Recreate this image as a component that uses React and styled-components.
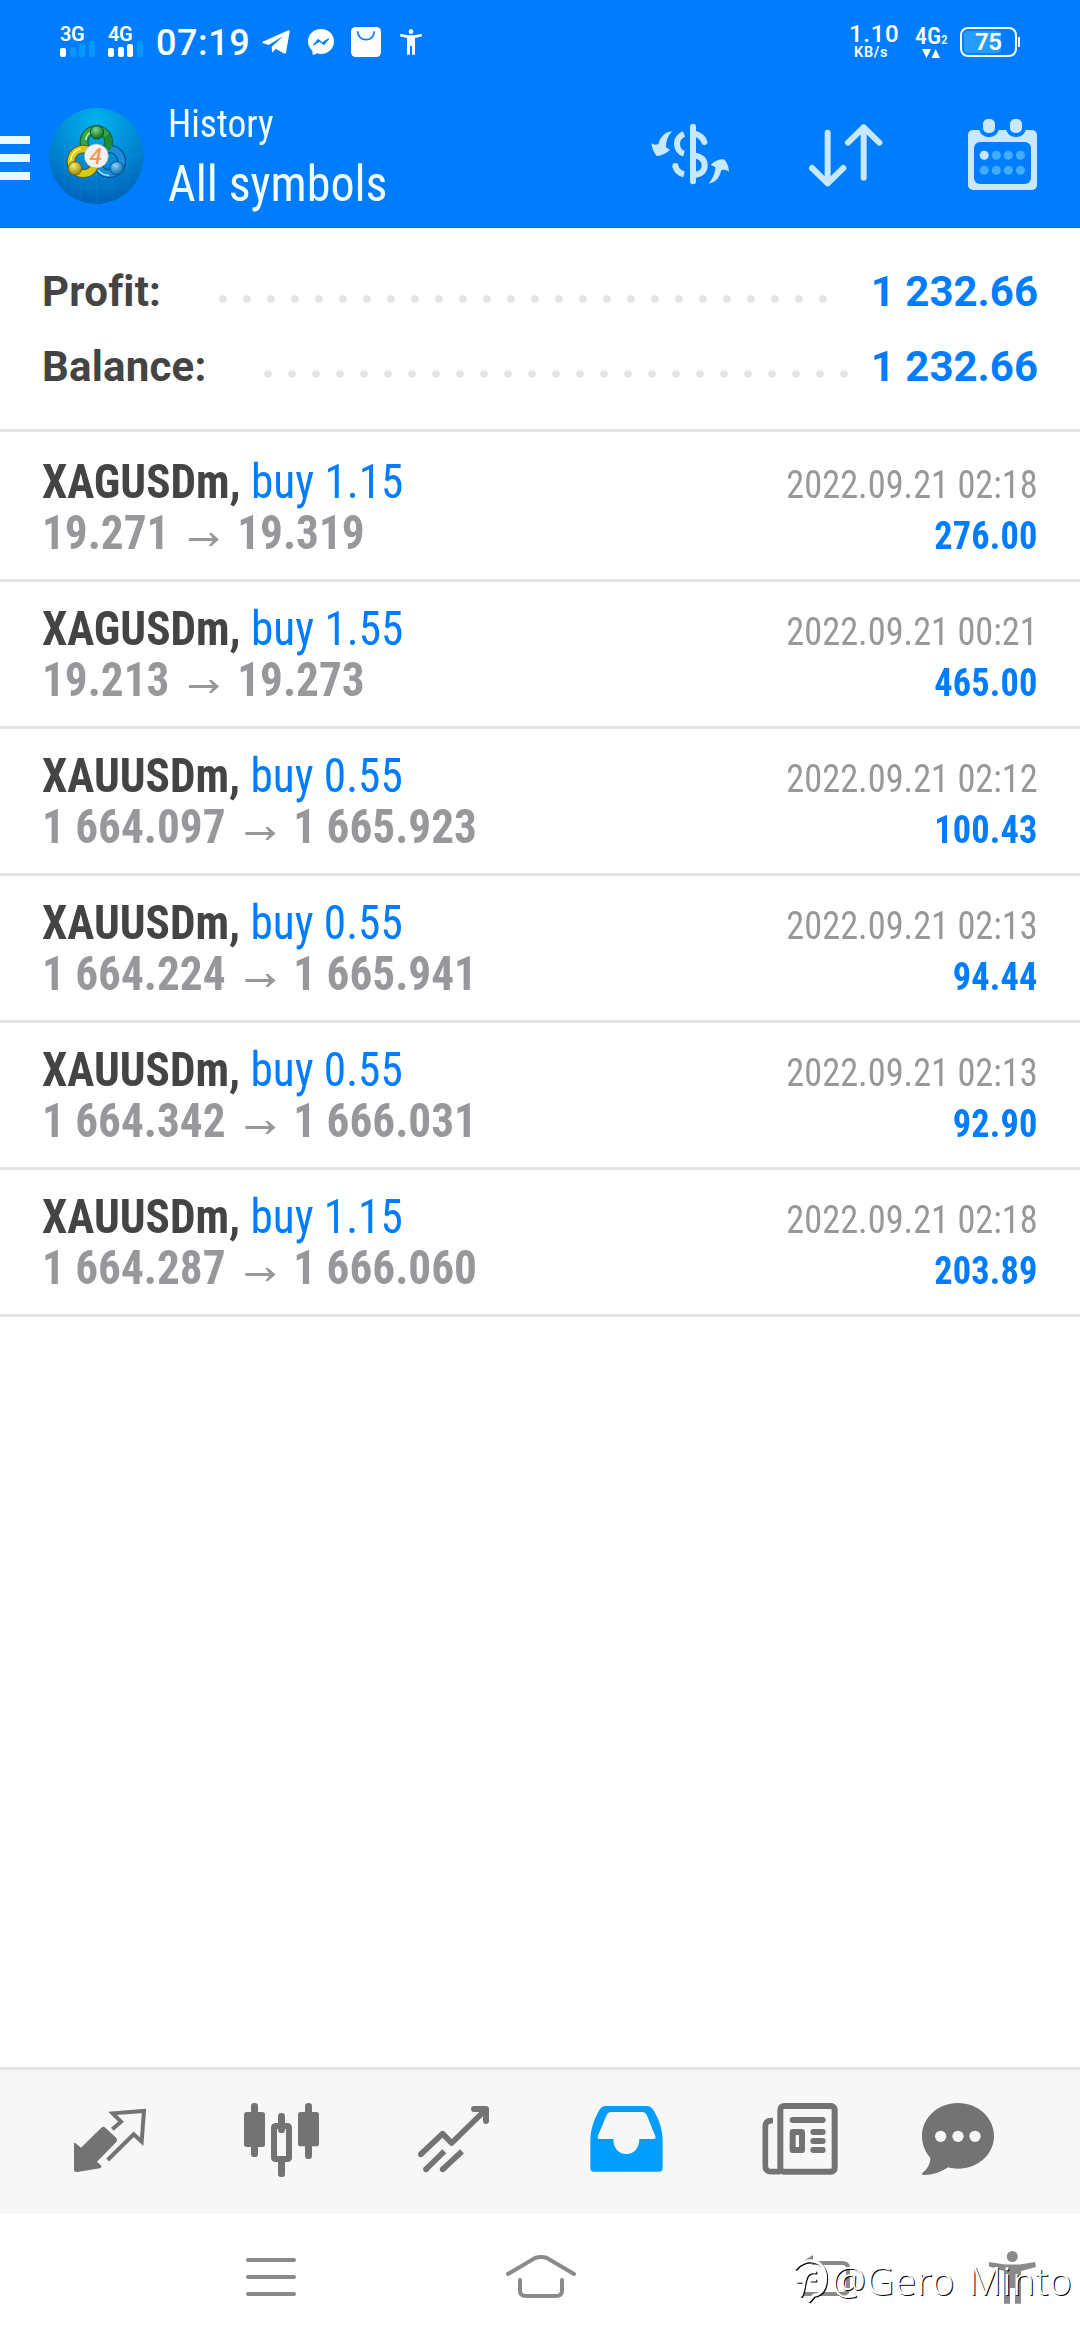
import React, { Fragment } from "react";
import styled, { createGlobalStyle, css } from "styled-components";

const GlobalStyle = createGlobalStyle`
  * {
    box-sizing: border-box;
  }
  body {
    margin: 0;
    background: #fff;
    font-family: Roboto, "Liberation Sans", sans-serif;
  }
  svg {
    display: block;
    overflow: visible;
    flex-shrink: 0;
  }
`;

const condensed = css`
  font-family: "Roboto Condensed", Roboto, "Liberation Sans", sans-serif;
  font-stretch: 75%;
`;

const orders = [
  { symbol: "XAGUSDm", volume: "buy 1.15", open: "19.271", close: "19.319", time: "2022.09.21 02:18", profit: "276.00" },
  { symbol: "XAGUSDm", volume: "buy 1.55", open: "19.213", close: "19.273", time: "2022.09.21 00:21", profit: "465.00" },
  { symbol: "XAUUSDm", volume: "buy 0.55", open: "1 664.097", close: "1 665.923", time: "2022.09.21 02:12", profit: "100.43" },
  { symbol: "XAUUSDm", volume: "buy 0.55", open: "1 664.224", close: "1 665.941", time: "2022.09.21 02:13", profit: "94.44" },
  { symbol: "XAUUSDm", volume: "buy 0.55", open: "1 664.342", close: "1 666.031", time: "2022.09.21 02:13", profit: "92.90" },
  { symbol: "XAUUSDm", volume: "buy 1.15", open: "1 664.287", close: "1 666.060", time: "2022.09.21 02:18", profit: "203.89" },
];

/* layout */
const Screen = styled.div`
  position: relative;
  display: flex;
  flex-direction: column;
  width: 1080px;
  height: 2340px;
  overflow: hidden;
  background: #fff;
`;

const Header = styled.header`
  height: 228px;
  background: #007dff;
  color: #f2fdff;
  border-bottom: 1px solid #0070e0;
`;

/* status bar */
const StatusBar = styled.div`
  display: flex;
  align-items: flex-start;
  height: 84px;
  padding: 27px 63px 0 60px;
  color: #fff;
`;

const Signal = styled.div`
  width: ${(props) => props.$width}px;
`;

const Network = styled.div`
  height: 15px;
  font-size: 20px;
  font-weight: 600;
  line-height: 15px;
  letter-spacing: -0.5px;
`;

const Bars = styled.div`
  display: flex;
  align-items: flex-end;
  gap: 3.5px;
  height: 16px;
  margin-top: -1px;
`;

const Bar = styled.i`
  width: 6px;
  height: ${(props) => props.$height}px;
  border-radius: 2px;
  background: ${(props) => (props.$on ? "#fff" : "#0399ff")};
`;

const Clock = styled.div`
  width: 106px;
  font-size: 36px;
  font-weight: 500;
  line-height: 33px;
  letter-spacing: 0.6px;
`;

const StatusIcons = styled.div`
  display: flex;
  align-items: center;
  height: 30px;
  flex: 1;
`;

const StatusIcon = styled.svg`
  margin-right: ${(props) => props.$after}px;
`;

const Speed = styled.div`
  width: 66px;
  margin-top: -5px;
  font-size: 24px;
  font-weight: 500;
  line-height: 24px;
  letter-spacing: 0.7px;
  small {
    display: block;
    margin: 2px 0 0 5px;
    font-size: 14.5px;
    font-weight: 600;
    line-height: 10px;
  }
`;

const DataType = styled.div`
  width: 45px;
  margin-top: -3px;
  font-size: 24px;
  font-weight: 500;
  line-height: 24px;
  ${condensed}
  sub {
    font-size: 13px;
    line-height: 0;
    vertical-align: baseline;
  }
  svg {
    margin: 1px 0 0 7px;
  }
`;

const Battery = styled.div`
  position: relative;
  width: 57px;
  height: 30px;
  border: 2px solid #f2fdff;
  border-radius: 8px;
  padding: 2px;
  &::after {
    content: "";
    position: absolute;
    right: -5px;
    top: 8px;
    width: 2px;
    height: 10px;
    background: #f2fdff;
  }
`;

const Charge = styled.div`
  width: 75%;
  height: 100%;
  border-radius: 4px;
  background: #259cff;
  padding-left: 11px;
  font-size: 24px;
  font-weight: 600;
  line-height: 23px;
  letter-spacing: -0.5px;
`;

/* toolbar */
const Toolbar = styled.div`
  display: flex;
  align-items: center;
  height: 144px;
  padding-right: 42px;
`;

const MenuButton = styled.div`
  display: flex;
  flex-direction: column;
  gap: 10px;
  width: 30px;
  margin: 4px 18px 0 0;
  i {
    height: 8px;
    background: #e8fbff;
  }
`;

const Title = styled.div`
  flex: 1;
  padding-left: 24px;
  ${condensed}
`;

const Caption = styled.div`
  font-size: 38px;
  line-height: 54px;
  transform: scaleX(0.985);
  transform-origin: left;
`;

const Scope = styled.div`
  padding-top: 2px;
  font-size: 50px;
  line-height: 62px;
  transform: scaleX(0.96);
  transform-origin: left;
`;

const ToolIcon = styled.svg`
  margin-left: ${(props) => props.$gap || 0}px;
`;

/* totals */
const Summary = styled.section`
  height: 204px;
  padding: 26px 42px 0;
  border-bottom: 3px solid #e4e4e4;
`;

const Total = styled.div`
  display: flex;
  height: 75px;
  line-height: 75px;
  font-size: 42px;
  font-weight: 700;
`;

const TotalName = styled.div`
  width: ${(props) => props.$width}px;
  letter-spacing: 0.2px;
  color: #444;
`;

const Leader = styled.div`
  width: ${(props) => props.$dots * 24}px;
  height: 24px;
  margin-top: 33px;
  background: radial-gradient(circle, #e4e4e4 3.4px, transparent 4.2px) 0 0 / 24px 24px;
`;

const TotalValue = styled.div`
  flex: 1;
  text-align: right;
  color: #007dff;
`;

/* orders */
const List = styled.main`
  flex: 1;
  padding-top: 3px;
  ${condensed}
`;

const Order = styled.div`
  display: flex;
  justify-content: space-between;
  height: 147px;
  padding: 21px 42px 0;
  border-bottom: 3px solid #e4e4e4;
`;

/* the list face is a touch narrower than the condensed cut */
const Position = styled.div`
  font-size: 48px;
  line-height: 51px;
  transform: scaleX(0.942);
  transform-origin: left;
`;

const Deal = styled.div`
  color: #007dff;
  b {
    font-weight: 700;
    color: #444;
  }
`;

const Prices = styled.div`
  display: flex;
  font-weight: 700;
  color: #97989c;
  svg {
    margin: 26px 19px 0 21px;
  }
`;

const Result = styled.div`
  padding-top: 4px;
  font-size: 39px;
  line-height: 51px;
  text-align: right;
  color: #97989c;
  transform: scaleX(0.932);
  transform-origin: right;
  b {
    display: block;
    font-weight: 700;
    letter-spacing: 0.2px;
    color: #007dff;
  }
`;

/* bottom tabs */
const Tabs = styled.nav`
  display: flex;
  height: 147px;
  padding-left: 24px;
  border-top: 3px solid #e4e4e4;
  background: #f7f7f7;
`;

const Tab = styled.div`
  display: flex;
  align-items: center;
  justify-content: center;
  width: 172px;
  color: ${(props) => (props.$active ? "#039dff" : "#737373")};
`;

const SystemBar = styled.div`
  display: flex;
  height: 126px;
  padding: 40px 0 0 246px;
  color: #8a8a8a;
`;

const SystemIcon = styled.svg`
  margin-right: ${(props) => props.$after || 0}px;
`;

const Watermark = styled.div`
  position: absolute;
  left: 793px;
  bottom: 34px;
  display: flex;
  align-items: center;
  color: #fff;
  font-family: "Noto Sans", sans-serif;
  font-size: 38px;
  font-weight: 300;
  line-height: 52px;
  letter-spacing: 0.8px;
  word-spacing: 3px;
  white-space: nowrap;
  text-shadow: 1px 1px 0 #000;
  svg {
    filter: drop-shadow(1px 1px 0 #000);
  }
`;

const TabIcon = (props) => <svg width="96" height="96" viewBox="0 0 288 288" fill="currentColor" {...props} />;

const Logo = () => (
  <svg width="96" height="96" viewBox="0 0 288 288">
    <defs>
      <radialGradient id="sky" cx="50%" cy="15%" r="85%">
        <stop offset="0" stopColor="#00b4ee" />
        <stop offset="0.55" stopColor="#0087d4" />
        <stop offset="1" stopColor="#0062b8" />
      </radialGradient>
      <radialGradient id="green" cx="40%" cy="30%" r="70%">
        <stop offset="0" stopColor="#7fd68a" />
        <stop offset="1" stopColor="#0b6b22" />
      </radialGradient>
      <radialGradient id="yellow" cx="40%" cy="30%" r="70%">
        <stop offset="0" stopColor="#f6ee7a" />
        <stop offset="1" stopColor="#9a8a00" />
      </radialGradient>
      <radialGradient id="blue" cx="40%" cy="30%" r="70%">
        <stop offset="0" stopColor="#8fd4fa" />
        <stop offset="1" stopColor="#0768ae" />
      </radialGradient>
    </defs>
    <ellipse cx="145" cy="144" rx="142" ry="144" fill="url(#sky)" />
    <path d="M49 40V248M97 12V276M145 0V288M192 12V276M240 40V248M40 49H248M12 97H276M3 145H286M12 192H276M40 240H248" stroke="#3fb4ee" strokeOpacity="0.18" strokeWidth="2" />
    <g fill="none">
      <circle cx="145" cy="102" r="37" stroke="#0c5a2a" strokeWidth="26" />
      <circle cx="145" cy="102" r="37" stroke="#3aa44e" strokeWidth="20" />
      <path d="M113 96A33 33 0 0 1 134 70" stroke="#b5e8a8" strokeWidth="5" />
      <circle cx="184" cy="160" r="37" stroke="#063f7c" strokeWidth="26" />
      <circle cx="184" cy="160" r="37" stroke="#168fd8" strokeWidth="20" />
      <path d="M150 186A42 42 0 0 0 184 202" stroke="#9adcff" strokeWidth="5" />
      <circle cx="106" cy="160" r="37" stroke="#5c5c12" strokeWidth="26" />
      <circle cx="106" cy="160" r="37" stroke="#d6c912" strokeWidth="20" />
      <path d="M68 158A38 38 0 0 1 98 122" stroke="#fbf6a0" strokeWidth="5" />
      <path d="M176 82A37 37 0 0 1 178 122" stroke="#1f8a38" strokeWidth="20" />
    </g>
    <circle cx="147" cy="73" r="20" fill="url(#green)" stroke="#0a5a24" strokeWidth="3" />
    <circle cx="81" cy="181" r="20" fill="url(#yellow)" stroke="#6d6410" strokeWidth="3" />
    <circle cx="206" cy="181" r="20" fill="url(#blue)" stroke="#085a9c" strokeWidth="3" />
    <circle cx="145" cy="144" r="36" fill="#f1f1f1" stroke="#a9a9a9" strokeWidth="2" />
    <text x="143" y="168" textAnchor="middle" fontFamily="Roboto, sans-serif" fontSize="68" fontStyle="italic" fontWeight="500" fill="#f29a55">4</text>
  </svg>
);

const App = () => (
  <Fragment>
    <GlobalStyle />
    <Screen>
      <Header>
        <StatusBar>
          <Signal $width={48}>
            <Network>3G</Network>
            <Bars>
              <Bar $height={9} $on />
              <Bar $height={10} />
              <Bar $height={13} />
              <Bar $height={16} />
            </Bars>
          </Signal>
          <Signal $width={48}>
            <Network>4G</Network>
            <Bars>
              <Bar $height={9} $on />
              <Bar $height={10} $on />
              <Bar $height={13} $on />
              <Bar $height={16} />
            </Bars>
          </Signal>
          <Clock>07:19</Clock>
          <StatusIcons>
            <StatusIcon $after={18} width="28" height="24" viewBox="0 0 84 72" fill="#fff">
              <path d="M2 35L79 1Q84 0 83 5L72 68Q70 73 65 70L41 56L34 65Q31 69 30 63L29 50L64 18L20 45L2 39Q-1 37 2 35Z" />
            </StatusIcon>
            <StatusIcon $after={17} width="26" height="26" viewBox="0 0 78 78">
              <path d="M39 0C17 0 0 16 0 37C0 48 5 58 13 65L14 76Q15 79 18 77L27 73C31 74 35 75 39 75C61 75 78 59 78 37C78 16 61 0 39 0Z" fill="#fff" />
              <path d="M16 48L30 31L43 41L62 29L48 47L35 37Z" fill="#007dff" stroke="#007dff" strokeWidth="3" strokeLinejoin="round" />
            </StatusIcon>
            <StatusIcon $after={19} width="30" height="30" viewBox="0 0 90 90">
              <rect width="90" height="90" rx="14" fill="#fff" />
              <path d="M20 13C20 46 70 46 70 13" fill="none" stroke="#007dff" strokeWidth="5" />
            </StatusIcon>
            <StatusIcon $after={0} width="22" height="26" viewBox="0 0 66 78" fill="#fff">
              <circle cx="33" cy="8" r="7" />
              <path d="M1 15L25 19H41L65 15L66 22L45 27V77H36V51H30V77H21V27L0 22Z" />
            </StatusIcon>
          </StatusIcons>
          <Speed>
            1.10
            <small>KB/s</small>
          </Speed>
          <DataType>
            4G<sub>2</sub>
            <svg width="18" height="9" viewBox="0 0 18 9" fill="#fff">
              <path d="M0 0H9L4.500 9ZM9.500 9H18L13.700 0Z" />
            </svg>
          </DataType>
          <Battery>
            <Charge>75</Charge>
          </Battery>
        </StatusBar>
        <Toolbar>
          <MenuButton>
            <i />
            <i />
            <i />
          </MenuButton>
          <Logo />
          <Title>
            <Caption>History</Caption>
            <Scope>All symbols</Scope>
          </Title>
          <ToolIcon width="80" height="66" viewBox="0 0 240 198" fill="none" stroke="#c8e8ff" strokeWidth="18">
            <path d="M129 11V175" strokeLinecap="round" />
            <path d="M134 32Q158 39 163 57" strokeLinecap="round" />
            <path d="M134 97C156 101 164 112 164 127C164 145 154 153 134 156" />
            <path d="M102 33C85 40 81 50 81 62C81 78 90 89 102 92" />
            <path d="M102 154C87 150 80 143 76 130" />
            <circle cx="76" cy="129" r="9" fill="#c8e8ff" stroke="none" />
            <path d="M66 25C48 27 32 38 25 63Q13 68 4 60Q7 84 20 99Q42 98 60 81L48 73C48 52 55 38 66 25Z" fill="#c8e8ff" stroke="none" />
            <path d="M176 182C194 178 208 168 214 141Q228 138 237 146Q236 124 222 109Q198 108 182 126L196 132C195 150 190 164 176 182Z" fill="#c8e8ff" stroke="none" />
          </ToolIcon>
          <ToolIcon $gap={78} width="76" height="66" viewBox="0 0 228 198" fill="none" stroke="#c8e8ff" strokeWidth="18" strokeLinecap="round" strokeLinejoin="round">
            <path d="M59 29V181M12 135L59 181L106 135" />
            <path d="M167 164V13M120 59L167 13L214 59" />
          </ToolIcon>
          <ToolIcon $gap={82} width="72" height="74" viewBox="0 0 72 74">
            <rect x="2" y="11" width="69" height="60" rx="5" fill="#c8e8ff" />
            <rect x="8" y="23" width="57" height="42" rx="6" fill="#007dff" />
            <g fill="#c8e8ff" stroke="#007dff" strokeWidth="4">
              <rect x="15" y="-2" width="16" height="18" rx="7" />
              <rect x="42" y="-2" width="16" height="18" rx="7" />
            </g>
            <circle cx="18.200" cy="36.300" r="4.500" fill="#c8e8ff" />
            <g fill="#42adff">
              <circle cx="30.300" cy="36.300" r="4.500" />
              <circle cx="42.300" cy="36.300" r="4.500" />
              <circle cx="54.400" cy="36.300" r="4.500" />
              <circle cx="18.200" cy="51.300" r="4.500" />
              <circle cx="30.300" cy="51.300" r="4.500" />
              <circle cx="42.300" cy="51.300" r="4.500" />
              <circle cx="54.400" cy="51.300" r="4.500" />
            </g>
          </ToolIcon>
        </Toolbar>
      </Header>

      <Summary>
        <Total>
          <TotalName $width={169}>Profit:</TotalName>
          <Leader $dots={26} />
          <TotalValue>1 232.66</TotalValue>
        </Total>
        <Total>
          <TotalName $width={214}>Balance:</TotalName>
          <Leader $dots={25} />
          <TotalValue>1 232.66</TotalValue>
        </Total>
      </Summary>

      <List>
        {orders.map((order, i) => (
          <Order key={i}>
            <Position>
              <Deal>
                <b>{order.symbol},</b> {order.volume}
              </Deal>
              <Prices>
                {order.open}
                <svg width="32" height="13" viewBox="0 0 32 13" fill="#97989c">
                  <path d="M0 5H25L21 0H24L32 6.500L24 13H21L25 8H0Z" />
                </svg>
                {order.close}
              </Prices>
            </Position>
            <Result>
              {order.time}
              <b>{order.profit}</b>
            </Result>
          </Order>
        ))}
      </List>

      <Tabs>
        <Tab>
          <TabIcon>
            <path d="M36 150Q36 144 41 148L57 161L118 101Q124 96 130 101L163 132Q168 138 163 144L105 203L118 215Q120 220 114 223L46 234Q36 235 36 226Z" />
            <path d="M151 106L177 83L152 58L246 51L239 143L215 121L137 198" fill="none" stroke="currentColor" strokeWidth="12" />
          </TabIcon>
        </Tab>
        <Tab>
          <TabIcon>
            <rect x="51" y="27" width="21" height="162" rx="10" />
            <rect x="30" y="54" width="63" height="105" rx="8" />
            <rect x="132" y="57" width="21" height="60" rx="10" />
            <rect x="132" y="190" width="21" height="59" rx="8" />
            <rect x="120" y="96" width="45" height="99" rx="4" fill="none" stroke="currentColor" strokeWidth="18" />
            <rect x="213" y="27" width="21" height="168" rx="10" />
            <rect x="192" y="54" width="63" height="103" rx="8" />
          </TabIcon>
        </Tab>
        <Tab>
          <TabIcon fill="none" stroke="currentColor" strokeWidth="17">
            <path d="M44 181L110 119L137 147L238 48" strokeLinejoin="round" />
            <path d="M204 45H240V81" strokeWidth="18" strokeLinecap="round" strokeLinejoin="round" />
            <path d="M60 226L115 172M110 226L168 172" />
            <g fill="currentColor" stroke="none">
              <circle cx="44.500" cy="181" r="8.500" />
              <circle cx="60" cy="226" r="8.500" />
              <circle cx="110" cy="226" r="8.500" />
            </g>
          </TabIcon>
        </Tab>
        <Tab $active>
          <TabIcon fillRule="evenodd">
            <path d="M82 36H208Q218 36 224 45C242 72 254 106 254 140V222Q254 233 243 233H48Q37 233 37 222V140C37 106 49 72 66 45Q72 36 82 36ZM98 54Q90 54 86 62L60 125Q57 135 66 135H106C106 162 122 180 145 180C168 180 184 162 184 135H226Q235 135 232 127L206 62Q202 54 194 54Z" />
          </TabIcon>
        </Tab>
        <Tab>
          <TabIcon fill="none" stroke="currentColor" strokeWidth="18">
            <rect x="91" y="36" width="163" height="197" rx="11" />
            <path d="M69 80H64Q46 80 46 98V215Q46 233 64 233H91" strokeWidth="17" />
            <rect x="128" y="114" width="28" height="54" rx="1" />
            <path d="M128 78H218M190 114H218M190 141H218M190 168H218" strokeLinecap="round" />
          </TabIcon>
        </Tab>
        <Tab>
          <TabIcon>
            <path d="M108 27C48 27 0 71 0 126C0 151 9 174 25 191C25 210 16 225 2 236Q-3 243 5 243C32 243 57 235 78 220C88 223 98 224 108 224C168 224 216 181 216 126C216 71 168 27 108 27Z" />
            <g fill="#f7f7f7">
              <circle cx="56" cy="127" r="17" />
              <circle cx="108" cy="127" r="17" />
              <circle cx="159" cy="127" r="17" />
            </g>
          </TabIcon>
        </Tab>
      </Tabs>

      <SystemBar>
        <SystemIcon $after={210} width="50" height="50" viewBox="0 0 50 50" fill="none" stroke="currentColor" strokeWidth="4" strokeLinecap="round">
          <path d="M2 6H48M2 23H48M2 40H48" />
        </SystemIcon>
        <SystemIcon $after={222} width="70" height="50" viewBox="0 0 70 50" fill="none" stroke="currentColor" strokeWidth="4" strokeLinecap="round">
          <path d="M2 20L29 4Q35 2 41 4L68 20" />
          <path d="M14 26V37Q14 42 20 42H50Q56 42 56 37V26" />
        </SystemIcon>
        <SystemIcon $after={136} width="54" height="50" viewBox="0 0 54 50" fill="none" stroke="currentColor" strokeWidth="4">
          <path d="M14 9H44Q50 9 50 14V35Q50 40 44 40H6" />
          <path d="M0 10L15 1V10Z" fill="currentColor" stroke="none" />
        </SystemIcon>
        <SystemIcon width="48" height="50" viewBox="0 0 48 50" fill="currentColor">
          <circle cx="24.300" cy="2.500" r="5.500" />
          <path d="M1 8L17 10.500H32L47 8L48 13L33 17V49.700H27V34H22V49.700H16V17L1 12.500Z" />
        </SystemIcon>
      </SystemBar>

      <Watermark>
        <svg width="39" height="44" viewBox="0 0 117 132" fill="none" stroke="#fff" strokeWidth="9" strokeLinecap="round">
          <path d="M8 30C34 -4 98 0 98 60C98 92 84 110 62 112L48 128" />
          <path d="M24 112C34 96 30 62 44 48Q54 38 66 42M14 70H34M54 66H66" />
        </svg>
        @Gero Minto
      </Watermark>
    </Screen>
  </Fragment>
);

export default App;
